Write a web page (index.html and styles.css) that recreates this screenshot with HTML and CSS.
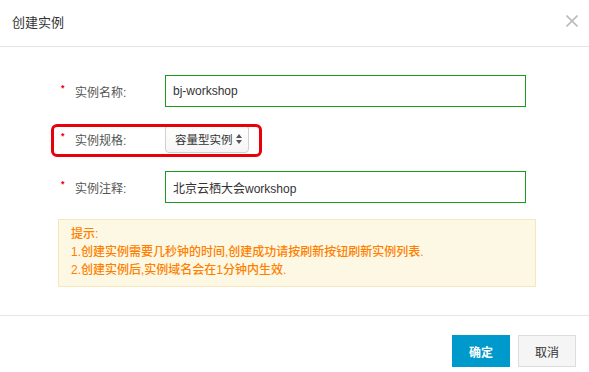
FILE: index.html
```html
<!DOCTYPE html>
<html lang="zh-CN">
<head>
<meta charset="utf-8">
<title>创建实例</title>
<link rel="stylesheet" href="styles.css">
</head>
<body>
<div class="dialog">
  <div class="header">
    <div class="title">创建实例</div>
    <svg class="close" width="12" height="12" viewBox="0 0 12 12"><path d="M0.5 0.5 L11.5 11.5 M11.5 0.5 L0.5 11.5" stroke="#bbbbbb" stroke-width="1.6" fill="none"/></svg>
  </div>
  <div class="body">
    <div class="row">
      <span class="star">*</span>
      <span class="label">实例名称:</span>
      <input class="text-input" type="text" value="bj-workshop">
    </div>
    <div class="row row-mark">
      <span class="star">*</span>
      <span class="label">实例规格:</span>
      <div class="select">
        <span>容量型实例</span>
        <svg class="arrows" width="6" height="10" viewBox="0 0 6 10"><path d="M3 0 L6 4 L0 4 Z M0 6 L6 6 L3 10 Z" fill="#555"/></svg>
      </div>
      <div class="mark"></div>
    </div>
    <div class="row">
      <span class="star">*</span>
      <span class="label">实例注释:</span>
      <input class="text-input" type="text" value="北京云栖大会workshop">
    </div>
    <div class="tip">
      <div>提示:</div>
      <div>1.创建实例需要几秒钟的时间,创建成功请按刷新按钮刷新实例列表.</div>
      <div>2.创建实例后,实例域名会在1分钟内生效.</div>
    </div>
  </div>
  <div class="footer">
    <button class="btn btn-primary">确定</button>
    <button class="btn btn-default">取消</button>
  </div>
</div>
</body>
</html>
```

FILE: styles.css
```css
html, body {
  margin: 0;
  padding: 0;
  background: #ffffff;
}
body {
  font-family: "Liberation Sans", "Noto Sans CJK SC", sans-serif;
  font-size: 12px;
  color: #333333;
}
.dialog {
  width: 589px;
  height: 372px;
  overflow: hidden;
}
.header {
  height: 42px;
  padding: 0 12px 4px 12px;
  display: flex;
  align-items: center;
  justify-content: space-between;
  border-bottom: 1px solid #e5e5e5;
}
.title {
  font-size: 13px;
  color: #333333;
}
.close {
  display: block;
  margin-right: -1px;
}
.body {
  padding-top: 28px;
}
.row {
  height: 32px;
  margin-bottom: 16px;
  display: flex;
  align-items: center;
  padding-left: 61px;
}
.row-mark {
  position: relative;
}
.star {
  width: 14px;
  color: #e60000;
  font-size: 9px;
  font-weight: bold;
  align-self: flex-start;
  margin-top: 9px;
  line-height: 9px;
}
.label {
  width: 90px;
  color: #555555;
  font-size: 12px;
}
.text-input {
  box-sizing: border-box;
  width: 361px;
  height: 32px;
  margin: 0;
  border: 1px solid #1a9b1a;
  padding: 0 7px;
  font-family: "Liberation Sans", "Noto Sans CJK SC", sans-serif;
  font-size: 12px;
  color: #333333;
  outline: none;
  background: #ffffff;
}
.select {
  box-sizing: border-box;
  width: 84px;
  height: 28px;
  border: 1px solid #d0d0d0;
  border-radius: 4px;
  background: linear-gradient(#ffffff, #f6f6f6);
  display: flex;
  align-items: center;
  justify-content: space-between;
  padding: 0 6px 0 9px;
  color: #333333;
  font-size: 11.5px;
}
.arrows {
  display: block;
}
.mark {
  position: absolute;
  left: 51px;
  top: 1px;
  width: 211px;
  height: 33px;
  box-sizing: border-box;
  border: 3px solid #e8000b;
  border-radius: 6px;
}
.tip {
  box-sizing: border-box;
  width: 478px;
  height: 68px;
  margin-left: 58px;
  padding: 5px 12px 7px 12px;
  background: #fcf8e3;
  border: 1px solid #f8e6bd;
  color: #ff7f00;
  font-size: 12px;
  font-weight: 500;
  line-height: 18px;
}
.footer {
  margin-top: 28px;
  border-top: 1px solid #e5e5e5;
  padding: 19px 13px 0 0;
  display: flex;
  justify-content: flex-end;
  gap: 8px;
}
.btn {
  box-sizing: border-box;
  width: 58px;
  height: 32px;
  margin: 0;
  font-family: "Liberation Sans", "Noto Sans CJK SC", sans-serif;
  font-size: 12px;
  cursor: pointer;
}
.btn-primary {
  background: #0099cc;
  border: 1px solid #0099cc;
  color: #ffffff;
  font-weight: bold;
}
.btn-default {
  background: #f5f5f5;
  border: 1px solid #dddddd;
  color: #333333;
}
```
